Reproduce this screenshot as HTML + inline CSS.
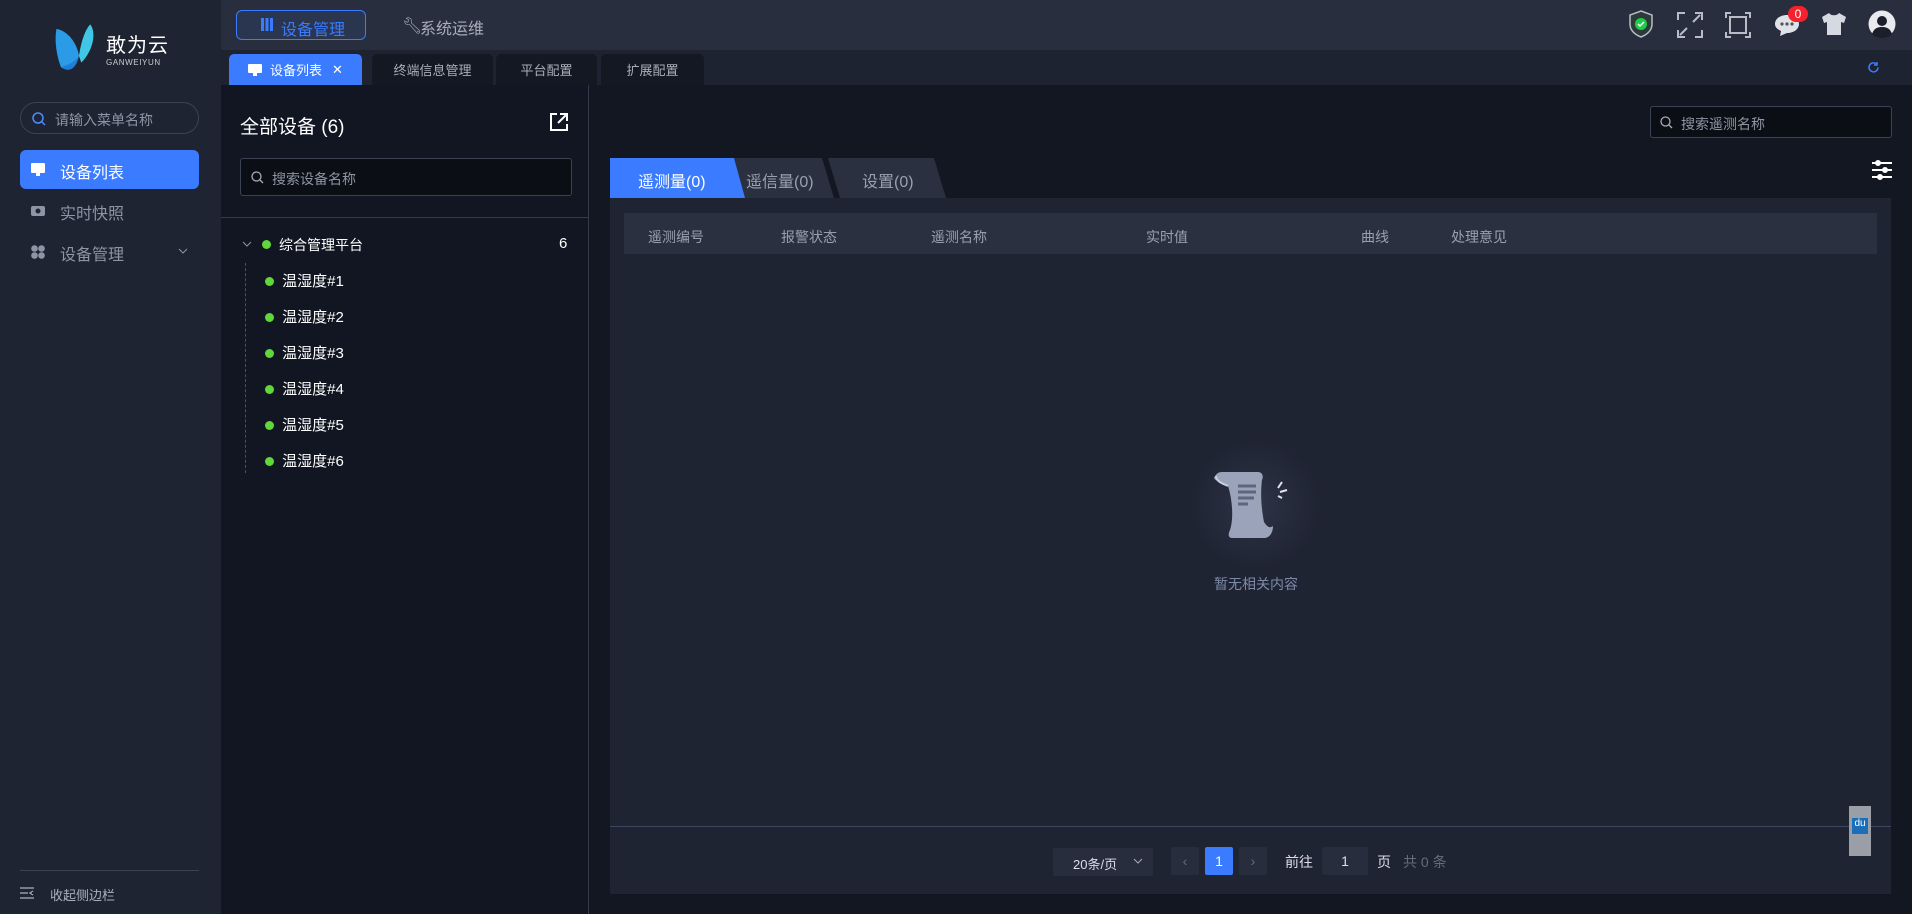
<!DOCTYPE html>
<html><head><meta charset="utf-8"><style>
*{box-sizing:border-box;margin:0;padding:0}
body{width:1912px;height:914px;overflow:hidden;background:#131722;font-family:"Liberation Sans","Noto Sans CJK SC",sans-serif;color:#c8ccd6;position:relative}
.abs{position:absolute}
.side{left:0;top:0;width:221px;height:914px;background:#1f2433}
.top{left:221px;top:0;width:1691px;height:50px;background:#282e3e}
.tabs{left:221px;top:50px;width:1691px;height:35px;background:#1e2331}
.tab{top:54px;height:31px;background:#141822;border-radius:5px 5px 0 0;font-size:13px;color:#a8adb8;display:flex;align-items:center;justify-content:center}
.panel{left:221px;top:85px;width:368px;height:829px;background:#121622;border-right:1px solid #343a4c}
.dot{width:9px;height:9px;border-radius:50%;background:#5fd93a;display:inline-block;margin-right:4px}
.tree{font-size:15px;color:#fff}
.th{font-size:14px;color:#98a0ae;top:227px}
</style></head><body>
<div class="abs side"></div>
<!-- logo -->
<svg class="abs" style="left:52px;top:22px" width="54" height="52" viewBox="0 0 48 46"><path d="M4 6 C14 8 22 18 24 30 C20 40 12 44 8 40 C4 30 2 16 4 6Z" fill="#2b9be8"/><path d="M24 30 C26 16 30 6 34 2 C40 10 36 26 26 36Z" fill="#41c7e6"/><path d="M8 40 C14 38 20 36 24 30 C22 40 16 46 8 40Z" fill="#1f7fd8"/></svg>
<div class="abs" style="left:106px;top:36px;font-size:20px;line-height:20px;color:#fff;letter-spacing:1px">敢为云</div>
<div class="abs" style="left:106px;top:59px;font-size:8px;line-height:8px;color:#ccc;letter-spacing:.6px">GANWEIYUN</div>
<div class="abs" style="left:20px;top:102px;width:179px;height:32px;border:1px solid #3b4254;border-radius:16px;font-size:14px;color:#8e94a3;padding:7px 0 0 34px">请输入菜单名称</div>
<svg class="abs" style="left:32px;top:112px" width="14" height="14"><circle cx="6" cy="6" r="5" fill="none" stroke="#4a8cff" stroke-width="1.5"/><path d="M10 10 13 13" stroke="#4a8cff" stroke-width="1.5"/></svg>
<div class="abs" style="left:20px;top:150px;width:179px;height:39px;background:#3b7bff;border-radius:6px"></div>
<svg class="abs" style="left:31px;top:163px" width="14" height="14"><rect x="0" y="0" width="14" height="10" rx="1" fill="#fff"/><rect x="5" y="10" width="4" height="3" fill="#fff"/></svg>
<div class="abs" style="left:60px;top:159px;font-size:16px;color:#fff">设备列表</div>
<svg class="abs" style="left:31px;top:204px" width="14" height="12"><rect x="0" y="2" width="14" height="10" rx="2" fill="#8e94a3"/><circle cx="7" cy="7" r="2.5" fill="#1f2433"/></svg>
<div class="abs" style="left:60px;top:200px;font-size:16px;color:#8e94a3">实时快照</div>
<svg class="abs" style="left:31px;top:245px" width="14" height="14" fill="#8e94a3"><circle cx="3.5" cy="3.5" r="3.3"/><circle cx="10.5" cy="3.5" r="3.3"/><circle cx="3.5" cy="10.5" r="3.3"/><circle cx="10.5" cy="10.5" r="3.3"/></svg>
<div class="abs" style="left:60px;top:241px;font-size:16px;color:#8e94a3">设备管理</div>
<svg class="abs" style="left:178px;top:248px" width="10" height="6"><path d="M1 1 5 5 9 1" fill="none" stroke="#8e94a3"/></svg>
<div class="abs" style="left:20px;top:870px;width:179px;height:1px;background:#3b4254"></div>
<svg class="abs" style="left:20px;top:887px" width="14" height="12" stroke="#aab0bc" stroke-width="1.3"><path d="M0 1h14M0 6h8M0 11h14M13 4l-3 2 3 2"/></svg>
<div class="abs" style="left:50px;top:885px;font-size:13px;color:#aab0bc">收起侧边栏</div>

<div class="abs top"></div>
<div class="abs" style="left:236px;top:10px;width:130px;height:30px;border:1px solid #3b7bff;border-radius:6px;background:#2a3550;color:#3b7bff;font-size:16px;padding:5px 0 0 44px">设备管理</div>
<svg class="abs" style="left:261px;top:18px" width="12" height="13" fill="#3b7bff"><rect x="0" y="0" width="3" height="13"/><rect x="4.5" y="0" width="3" height="13"/><rect x="9" y="0" width="3" height="13"/></svg>
<div class="abs" style="left:402px;top:16px;font-size:16px;color:#a8adb8">🔧&#xFE0E;</div>
<div class="abs" style="left:420px;top:15px;font-size:16px;color:#a8adb8">系统运维</div>
<!-- right icons -->
<svg class="abs" style="left:1629px;top:10px" width="24" height="28"><path d="M12 1 23 5V14C23 21 17 25 12 27 7 25 1 21 1 14V5Z" fill="#2c3a3a" stroke="#b8bcc4" stroke-width="1.5"/><circle cx="12" cy="14" r="6" fill="#1fcc4a"/><path d="M9 14 11 16 15 12" stroke="#fff" fill="none" stroke-width="1.5"/></svg>
<svg class="abs" style="left:1677px;top:12px" width="26" height="26" stroke="#b8bcc4" stroke-width="2" fill="none"><path d="M1 8V1H8M18 1H25V8M25 18V25H18M8 25H1V18M3 23 10 16M23 3 16 10"/></svg>
<svg class="abs" style="left:1725px;top:12px" width="26" height="26" stroke="#b8bcc4" stroke-width="2" fill="none"><path d="M1 6V1H6M20 1H25V6M25 20V25H20M6 25H1V20"/><rect x="5" y="5" width="16" height="16"/></svg>
<svg class="abs" style="left:1774px;top:13px" width="26" height="24"><path d="M13 2C20 2 25 6 25 11 25 16 20 20 13 20L6 23 7 18C3 16 1 14 1 11 1 6 6 2 13 2Z" fill="#dfe2e8"/><circle cx="8" cy="11" r="1.6" fill="#555"/><circle cx="13" cy="11" r="1.6" fill="#555"/><circle cx="18" cy="11" r="1.6" fill="#555"/></svg>
<div class="abs" style="left:1788px;top:6px;width:20px;height:16px;border-radius:8px;background:#f5222d;color:#fff;font-size:12px;text-align:center;line-height:16px">0</div>
<svg class="abs" style="left:1821px;top:12px" width="26" height="24"><path d="M8 1 1 5 3 11 6 10V23H20V10L23 11 25 5 18 1C16 4 10 4 8 1Z" fill="#d6d9e2"/></svg>
<svg class="abs" style="left:1868px;top:10px" width="28" height="28"><circle cx="14" cy="14" r="13.5" fill="#e8eaee"/><circle cx="14" cy="11" r="5" fill="#1a1f2b"/><path d="M4 24C6 18 10 17 14 17 18 17 22 18 24 24 21 27 17 28 14 28 11 28 7 27 4 24Z" fill="#1a1f2b"/></svg>

<div class="abs tabs"></div>
<div class="abs tab" style="left:229px;width:133px;background:#3b7bff;color:#fff"><svg width="14" height="14" style="margin-right:8px"><rect x="0" y="1" width="14" height="9" rx="1" fill="#fff"/><rect x="5" y="10" width="4" height="3" fill="#fff"/></svg>设备列表<span style="margin-left:10px;font-size:13px">✕</span></div>
<div class="abs tab" style="left:372px;width:121px">终端信息管理</div>
<div class="abs tab" style="left:496px;width:101px">平台配置</div>
<div class="abs tab" style="left:601px;width:103px">扩展配置</div>
<svg class="abs" style="left:1867px;top:61px" width="13" height="13" fill="none" stroke="#3b7bff" stroke-width="1.5"><path d="M11 6.5A4.5 4.5 0 1 1 9.5 3M10 1V4H7"/></svg>

<div class="abs panel"></div>
<div class="abs" style="left:240px;top:112px;font-size:19px;color:#fff">全部设备 (6)</div>
<svg class="abs" style="left:549px;top:112px" width="20" height="20" fill="none" stroke="#fff" stroke-width="2"><path d="M8 2H2V18H18V12M11 2H18V9M18 2 9 11"/></svg>
<div class="abs" style="left:240px;top:158px;width:332px;height:38px;background:#0b0e15;border:1px solid #3b4254;border-radius:3px;font-size:14px;color:#8e94a3;padding:10px 0 0 31px">搜索设备名称</div>
<svg class="abs" style="left:251px;top:171px" width="13" height="13"><circle cx="5.5" cy="5.5" r="4.5" fill="none" stroke="#aab" stroke-width="1.3"/><path d="M9 9 12 12" stroke="#aab" stroke-width="1.3"/></svg>
<div class="abs" style="left:221px;top:217px;width:368px;height:1px;background:#343a4c"></div>
<svg class="abs" style="left:242px;top:241px" width="10" height="6"><path d="M1 1 5 5 9 1" fill="none" stroke="#8e94a3"/></svg>
<span class="abs dot" style="left:262px;top:240px"></span>
<div class="abs tree" style="left:279px;top:235px;font-size:14px">综合管理平台</div>
<div class="abs tree" style="left:559px;top:235px">6</div>
<div class="abs" style="left:245px;top:263px;height:210px;border-left:1px dashed #4a5064"></div>
<div class="abs" style="left:265px;top:270px">
<div style="height:36px" class="tree"><span class="dot"></span> 温湿度#1</div>
<div style="height:36px" class="tree"><span class="dot"></span> 温湿度#2</div>
<div style="height:36px" class="tree"><span class="dot"></span> 温湿度#3</div>
<div style="height:36px" class="tree"><span class="dot"></span> 温湿度#4</div>
<div style="height:36px" class="tree"><span class="dot"></span> 温湿度#5</div>
<div style="height:36px" class="tree"><span class="dot"></span> 温湿度#6</div>
</div>

<div class="abs" style="left:1650px;top:106px;width:242px;height:32px;background:#0b0e15;border:1px solid #3b4254;border-radius:3px;font-size:14px;color:#8e94a3;padding:7px 0 0 30px">搜索遥测名称</div>
<svg class="abs" style="left:1660px;top:116px" width="13" height="13"><circle cx="5.5" cy="5.5" r="4.5" fill="none" stroke="#aab" stroke-width="1.3"/><path d="M9 9 12 12" stroke="#aab" stroke-width="1.3"/></svg>
<svg class="abs" style="left:1872px;top:160px" width="20" height="20" stroke="#fff" stroke-width="2"><path d="M0 3H20M0 10H20M0 17H20"/><circle cx="6" cy="3" r="2" fill="#fff"/><circle cx="13" cy="10" r="2" fill="#fff"/><circle cx="8" cy="17" r="2" fill="#fff"/></svg>

<svg class="abs" style="left:610px;top:158px" width="340" height="40"><polygon points="218,0 324,0 336,40 230,40" fill="#2a3040"/><polygon points="110,0 212,0 224,40 122,40" fill="#2a3040"/><polygon points="0,0 124,0 135,40 0,40" fill="#3b7bff"/></svg>
<div class="abs" style="left:638px;top:168px;font-size:16px;color:#fff">遥测量(0)</div>
<div class="abs" style="left:746px;top:168px;font-size:16px;color:#9aa0ad">遥信量(0)</div>
<div class="abs" style="left:862px;top:168px;font-size:16px;color:#9aa0ad">设置(0)</div>

<div class="abs" style="left:610px;top:198px;width:1281px;height:696px;background:#1f2433"></div>
<div class="abs" style="left:624px;top:213px;width:1253px;height:41px;background:#2a3040"></div>
<div class="abs th" style="left:648px">遥测编号</div>
<div class="abs th" style="left:781px">报警状态</div>
<div class="abs th" style="left:931px">遥测名称</div>
<div class="abs th" style="left:1146px">实时值</div>
<div class="abs th" style="left:1361px">曲线</div>
<div class="abs th" style="left:1451px">处理意见</div>

<div class="abs" style="left:1190px;top:440px;width:130px;height:130px;border-radius:50%;background:radial-gradient(circle,#2e3446 0%,#1f2433 70%)"></div>
<svg class="abs" style="left:1208px;top:468px" width="84" height="80"><path d="M14 4H50C54 4 56 8 54 12 52 28 54 44 56 54 60 60 62 60 65 58 65 64 62 70 56 70H24C20 70 20 66 22 62 26 50 24 30 20 18 16 14 8 14 6 10 8 6 10 4 14 4Z" fill="#9aa3ba"/><path d="M8 8C8 14 16 16 20 18" stroke="#c8cfdd" fill="none" stroke-width="2"/><g stroke="#5d667c" stroke-width="3"><path d="M30 18H48M30 24H48M30 30H46M30 36H40"/></g><path d="M70 20 74 14M72 24 79 22M70 28 74 30" stroke="#dfe3ec" stroke-width="2"/></svg>
<div class="abs" style="left:1214px;top:574px;font-size:14px;color:#7c8aa8">暂无相关内容</div>

<div class="abs" style="left:610px;top:826px;width:1281px;height:1px;background:#3f4860"></div>
<div class="abs" style="left:1053px;top:848px;width:100px;height:28px;background:#272d3c;border-radius:2px;font-size:13px;color:#dde;padding:6px 0 0 20px">20条/页</div>
<svg class="abs" style="left:1133px;top:858px" width="10" height="6"><path d="M1 1 5 5 9 1" fill="none" stroke="#aab"/></svg>
<div class="abs" style="left:1171px;top:847px;width:28px;height:28px;background:#272d3c;border-radius:2px;color:#666c7a;text-align:center;line-height:28px;font-size:14px">‹</div>
<div class="abs" style="left:1205px;top:847px;width:28px;height:28px;background:#3b7bff;border-radius:2px;color:#fff;text-align:center;line-height:28px;font-size:14px">1</div>
<div class="abs" style="left:1239px;top:847px;width:28px;height:28px;background:#272d3c;border-radius:2px;color:#666c7a;text-align:center;line-height:28px;font-size:14px">›</div>
<div class="abs" style="left:1285px;top:852px;font-size:14px;color:#dde">前往</div>
<div class="abs" style="left:1322px;top:847px;width:46px;height:28px;background:#272d3c;border-radius:2px;color:#dde;text-align:center;line-height:28px;font-size:14px">1</div>
<div class="abs" style="left:1377px;top:852px;font-size:14px;color:#dde">页</div>
<div class="abs" style="left:1403px;top:852px;font-size:14px;color:#666c7a">共 0 条</div>
<div class="abs" style="left:1849px;top:806px;width:22px;height:50px;background:#9a9ea6"></div>
<div class="abs" style="left:1852px;top:818px;width:16px;height:16px;background:#1a6fb8;font-size:10px;color:#fff;text-align:center">du</div>
</body></html>
